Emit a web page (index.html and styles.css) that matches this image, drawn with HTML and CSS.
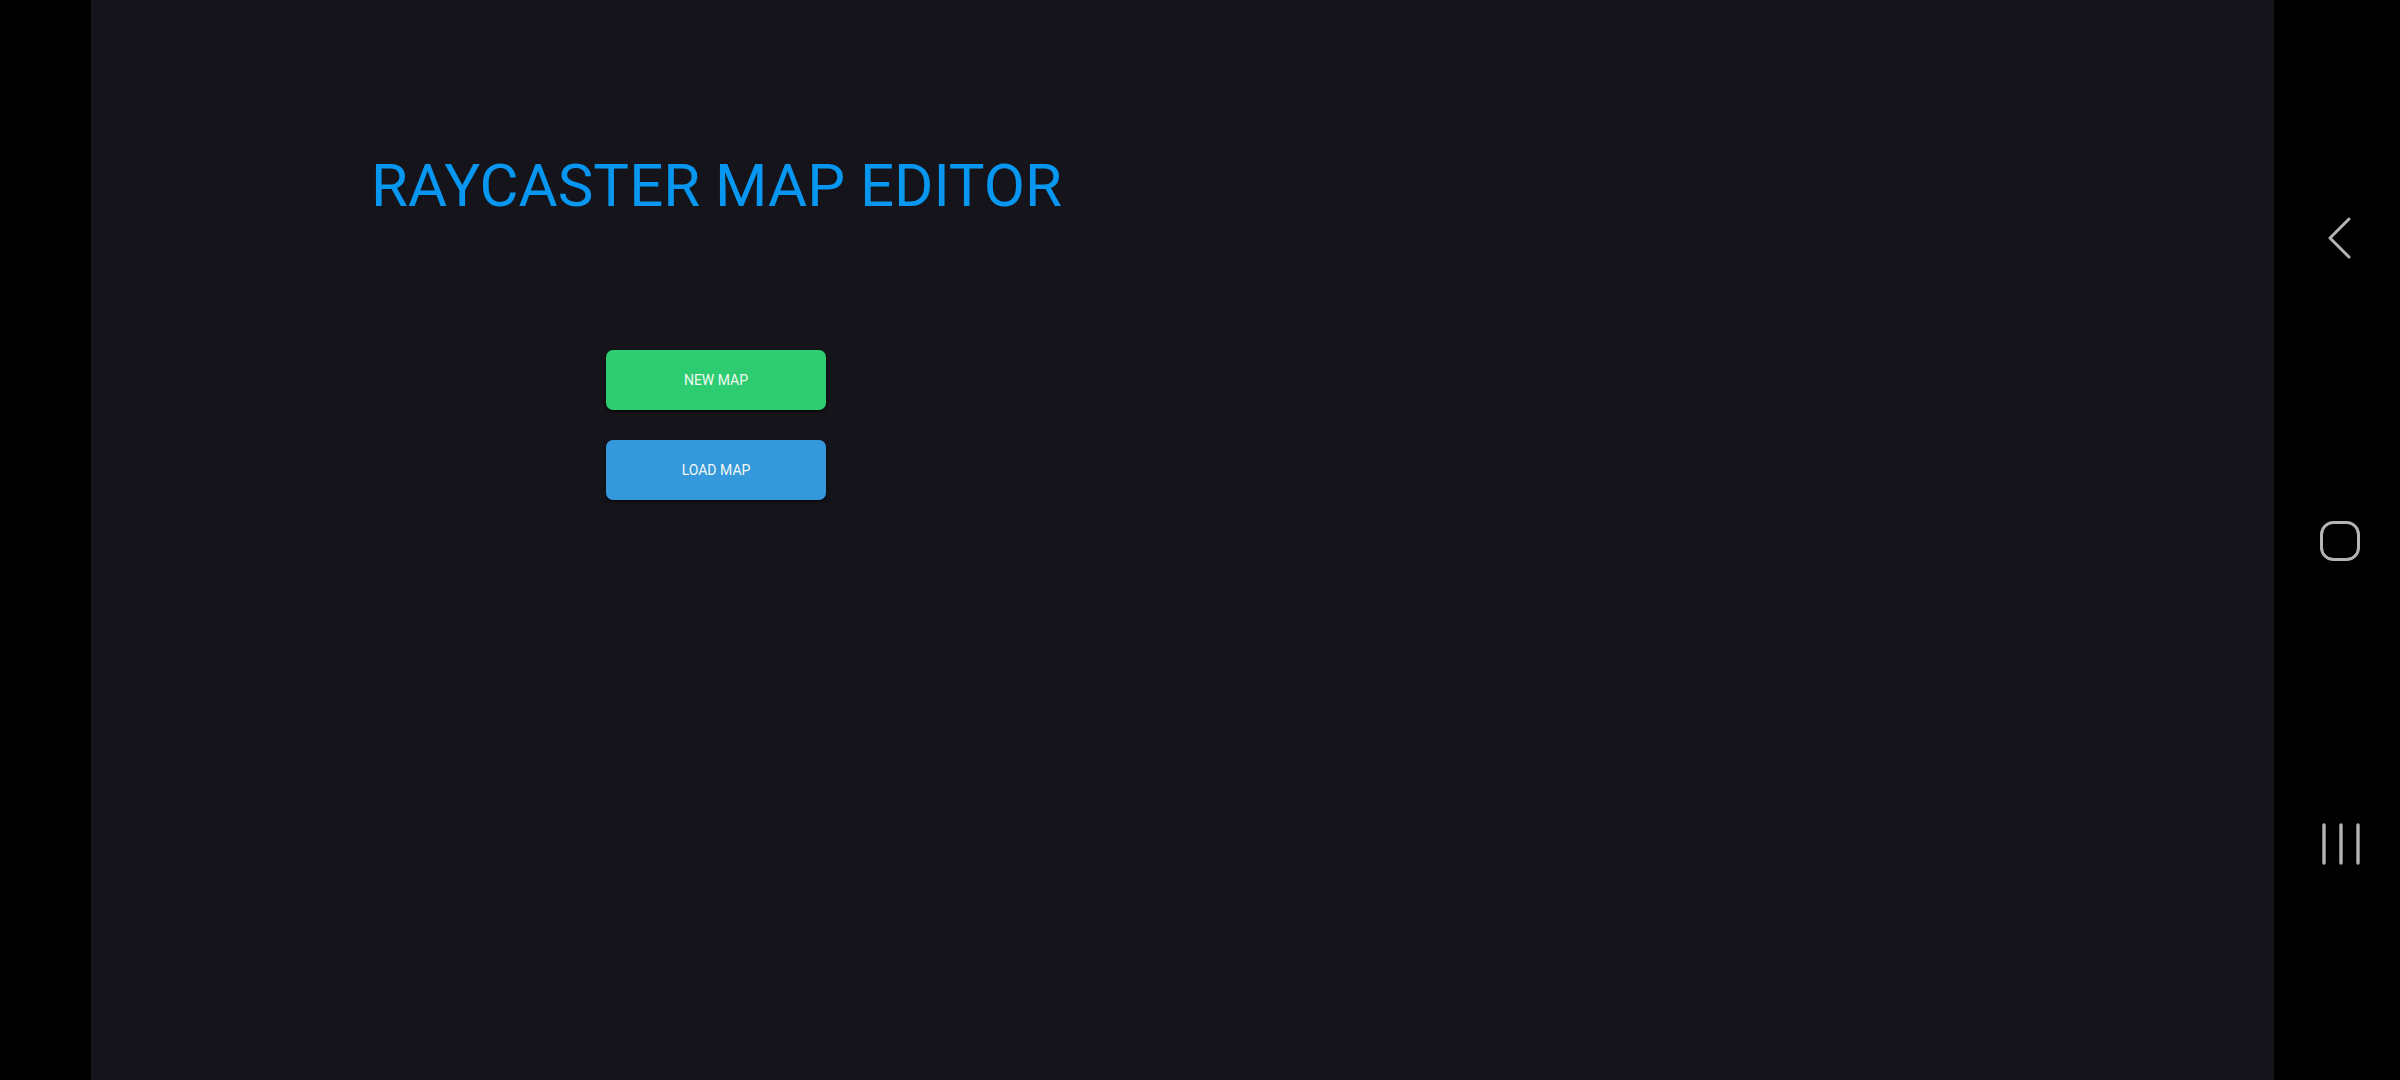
FILE: index.html
```html
<!DOCTYPE html>
<html lang="en">
<head>
<meta charset="utf-8">
<title>Raycaster Map Editor</title>
<link rel="stylesheet" href="styles.css">
</head>
<body>
<div class="screen">
  <div class="cutout"></div>
  <main class="app">
    <h1 class="title">RAYCASTER MAP EDITOR</h1>
    <div class="menu">
      <button class="btn btn-new">NEW MAP</button>
      <button class="btn btn-load">LOAD MAP</button>
    </div>
  </main>
  <nav class="navbar">
    <svg class="nav-icon" width="40" height="44" viewBox="0 0 40 44">
      <polyline points="29,3 10,22 29,41" fill="none" stroke="#b4b4b4" stroke-width="3" stroke-linecap="round" stroke-linejoin="round"/>
    </svg>
    <svg class="nav-icon" width="44" height="44" viewBox="0 0 44 44">
      <rect x="3.5" y="3.5" width="37" height="37" rx="12" ry="12" fill="none" stroke="#b4b4b4" stroke-width="3"/>
    </svg>
    <svg class="nav-icon" width="44" height="44" viewBox="0 0 44 44">
      <line x1="6" y1="3" x2="6" y2="41" stroke="#b4b4b4" stroke-width="3.4" stroke-linecap="round"/>
      <line x1="23" y1="3" x2="23" y2="41" stroke="#b4b4b4" stroke-width="3.4" stroke-linecap="round"/>
      <line x1="40" y1="3" x2="40" y2="41" stroke="#b4b4b4" stroke-width="3.4" stroke-linecap="round"/>
    </svg>
  </nav>
</div>
</body>
</html>
```
FILE: styles.css
```css
html, body {
  margin: 0;
  padding: 0;
  background: #000;
  width: 2400px;
  height: 1080px;
  overflow: hidden;
}

.screen {
  display: flex;
  width: 2400px;
  height: 1080px;
}

.cutout {
  width: 91px;
  flex: none;
  background: #000;
}

.app {
  flex: none;
  width: 2183px;
  background: #14141a;
  padding: 151px 0 0 280px;
  box-sizing: border-box;
  font-family: Roboto, "Liberation Sans", sans-serif;
}

.title {
  margin: 0;
  font-family: Roboto, "Liberation Sans", sans-serif;
  font-weight: 400;
  font-size: 60px;
  line-height: 70px;
  color: #0797f0;
  letter-spacing: 0;
}

.menu {
  display: flex;
  flex-direction: column;
  gap: 30px;
  margin: 129px 0 0 235px;
}

.btn {
  width: 220px;
  height: 60px;
  border: none;
  border-radius: 7px;
  font-family: Roboto, "Liberation Sans", sans-serif;
  font-size: 14px;
  color: #f2f8f4;
  padding: 0;
  box-shadow: 0 2px 3px rgba(0, 0, 0, 0.6);
  cursor: pointer;
}

.btn-new {
  background: #2ecc71;
}

.btn-load {
  background: #3498db;
}

.navbar {
  flex: 1;
  background: #000;
  display: flex;
  flex-direction: column;
  align-items: center;
  padding: 216px 0 0 6px;
  box-sizing: border-box;
}

.nav-icon {
  display: block;
}

.nav-icon + .nav-icon {
  margin-top: 259px;
}
```
